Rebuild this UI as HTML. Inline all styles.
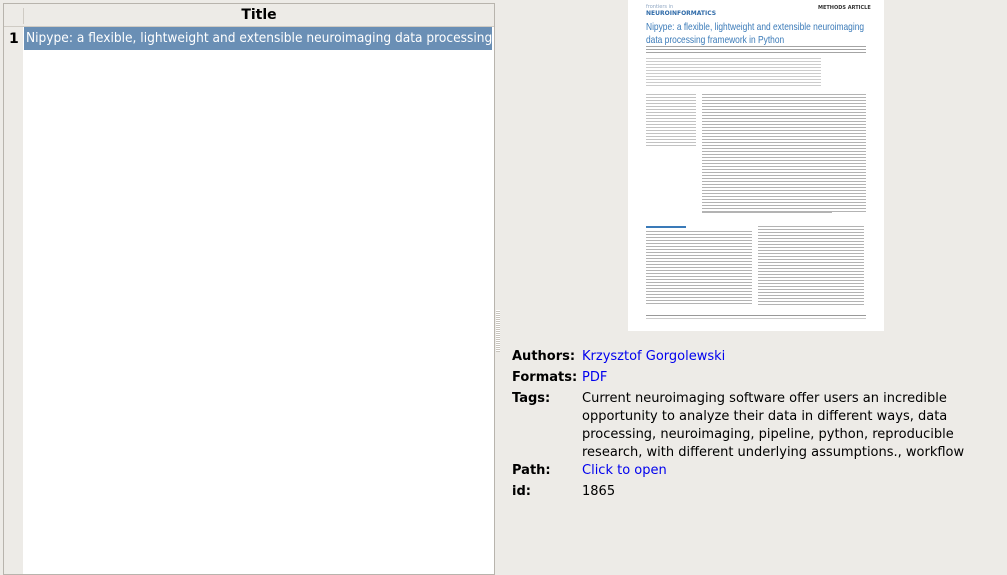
<!DOCTYPE html>
<html><head><meta charset="utf-8"><style>
body{margin:0;width:1007px;height:570px;background:#edebe7;font-family:"DejaVu Sans","Liberation Sans",sans-serif;position:relative;overflow:hidden}
.panel{position:absolute;left:3px;top:3px;width:490px;height:570px;border:1px solid #b8b4ad;background:#fff}
.hdr{position:absolute;left:0;top:0;width:490px;height:22px;background:#edebe7;border-bottom:1px solid #cfcbc4}
.hdr .t{position:absolute;left:20px;right:0;top:3px;text-align:center;font-weight:bold;font-size:14px;color:#000}
.hdr .sep{position:absolute;left:19px;top:4px;width:1px;height:16px;background:#cfcbc4}
.rn{position:absolute;left:0;top:23px;width:19px;height:547px;background:#edebe7}
.rn b{position:absolute;left:5px;top:4px;font-size:14px}
.sel{position:absolute;left:20px;top:23px;width:468px;height:23px;background:#6a8fb5;color:#fff;font-family:"DejaVu Sans Condensed","DejaVu Sans",sans-serif;font-stretch:condensed;font-size:13.6px;line-height:23px;white-space:nowrap;overflow:hidden;padding-left:2px;box-sizing:border-box}
.grip{position:absolute;left:496px;top:310px;width:4px;height:42px;background:repeating-linear-gradient(#fff 0 1px,#c8c4bd 1px 2px)}
.thumb{position:absolute;left:628px;top:0;width:256px;height:331px;background:#fff}
.ln{position:absolute;background:repeating-linear-gradient(#9a9a9a 0 1px,#fff 1px 3px);opacity:.75}
.meta{position:absolute;left:512px;top:346px;font-size:13px;color:#000}
.row{position:relative;height:21px;line-height:21px}
.row .k{position:absolute;left:0;font-weight:bold}
.row .v{position:absolute;left:70px;width:400px}
a{color:#0000ee;text-decoration:none}
</style></head><body>
<div class="panel">
 <div class="hdr"><div class="sep"></div><div class="t">Title</div></div>
 <div class="rn"><b>1</b></div>
 <div class="sel">Nipype: a flexible, lightweight and extensible neuroimaging data processing framework in Python</div>
</div>
<div class="grip"></div>
<div class="thumb">
 <div style="position:absolute;left:18px;top:4px;font-size:5px;color:#8fa6c2">frontiers in</div>
 <div style="position:absolute;left:18px;top:10px;font-size:6px;font-weight:bold;color:#2e6aa8">NEUROINFORMATICS</div>
 <div style="position:absolute;left:190px;top:5px;font-size:5px;font-weight:bold;color:#333">METHODS ARTICLE</div>
 <div style="position:absolute;left:18px;top:21px;font-family:'Liberation Sans',sans-serif;font-size:10.5px;line-height:13px;color:#3a7ab8;white-space:nowrap;transform:scaleX(0.8);transform-origin:0 0">Nipype: a flexible, lightweight and extensible neuroimaging<br>data processing framework in Python</div>
 <div class="ln" style="left:18px;top:46px;width:220px;height:9px;opacity:.9"></div>
 <div class="ln" style="left:18px;top:58px;width:175px;height:28px;opacity:.5"></div>
 <div class="ln" style="left:18px;top:94px;width:50px;height:52px;opacity:.6"></div>
 <div class="ln" style="left:74px;top:94px;width:164px;height:118px"></div>
 <div class="ln" style="left:74px;top:212px;width:130px;height:3px"></div>
 <div style="position:absolute;left:18px;top:226px;width:40px;height:2px;background:#3a7ab8"></div>
 <div class="ln" style="left:18px;top:231px;width:106px;height:75px"></div>
 <div class="ln" style="left:130px;top:226px;width:106px;height:80px"></div>
 <div style="position:absolute;left:18px;top:315px;width:220px;height:1px;background:#999"></div>
 <div class="ln" style="left:18px;top:318px;width:220px;height:2px;opacity:.5"></div>
</div>
<div class="meta">
 <div class="row"><span class="k">Authors:</span><span class="v"><a>Krzysztof Gorgolewski</a></span></div>
 <div class="row"><span class="k">Formats:</span><span class="v"><a>PDF</a></span></div>
 <div class="row" style="height:72px"><span class="k">Tags:</span><span class="v" style="line-height:18px;top:2px">Current neuroimaging software offer users an incredible opportunity to analyze their data in different ways, data processing, neuroimaging, pipeline, python, reproducible research, with different underlying assumptions., workflow</span></div>
 <div class="row"><span class="k">Path:</span><span class="v"><a>Click to open</a></span></div>
 <div class="row"><span class="k">id:</span><span class="v">1865</span></div>
</div>
</body></html>
